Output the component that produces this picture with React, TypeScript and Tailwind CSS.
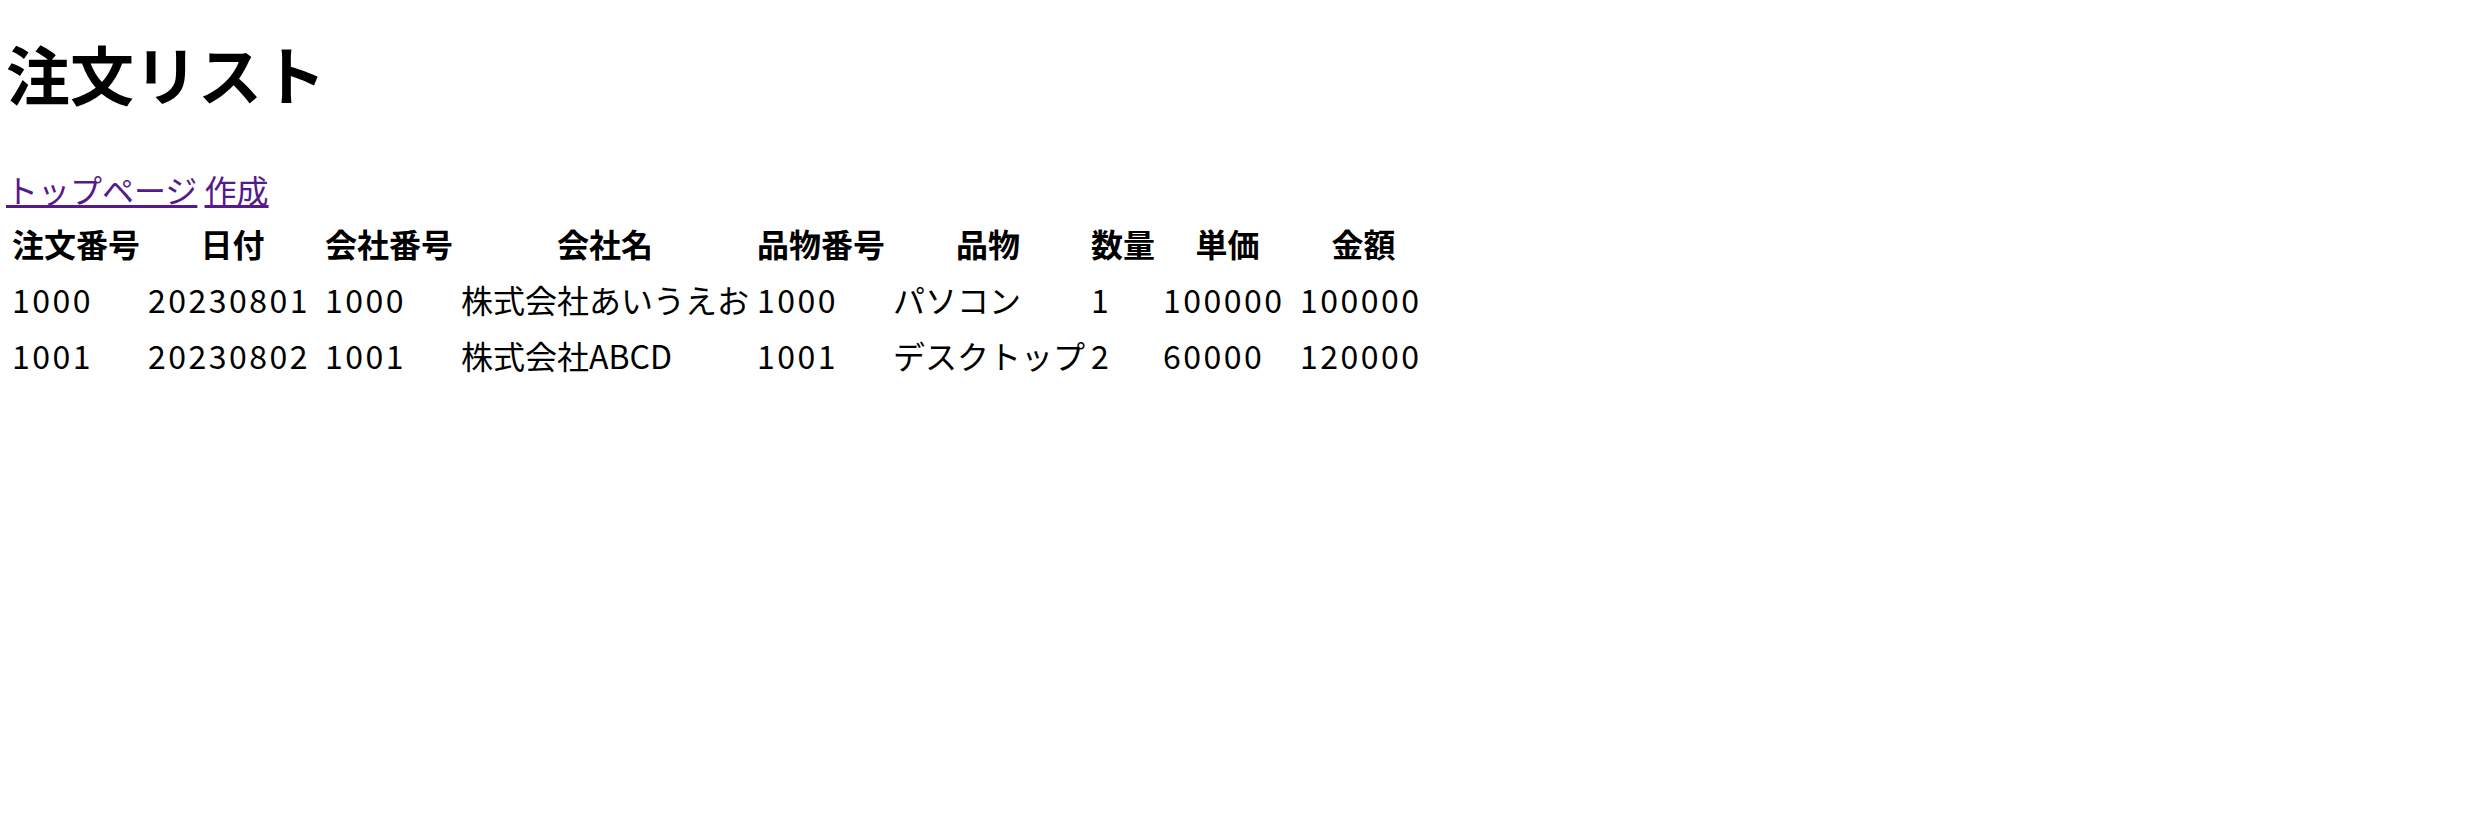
import React from "react";

const headers: { label: string; w: string }[] = [
  { label: "注文番号", w: "w-[132px]" },
  { label: "日付", w: "w-[173px]" },
  { label: "会社番号", w: "w-[132px]" },
  { label: "会社名", w: "w-[292px]" },
  { label: "品物番号", w: "w-[132px]" },
  { label: "品物", w: "w-[194px]" },
  { label: "数量", w: "w-[68px]" },
  { label: "単価", w: "w-[133px]" },
  { label: "金額", w: "w-[131px]" },
];

const rows: string[][] = [
  ["1000", "20230801", "1000", "株式会社あいうえお", "1000", "パソコン", "1", "100000", "100000"],
  ["1001", "20230802", "1001", "株式会社ABCD", "1001", "デスクトップ", "2", "60000", "120000"],
];

const isNum = (s: string) => /^[0-9]+$/.test(s);

export default function App() {
  return (
    <div
      className="min-h-screen bg-white text-black pl-[6px] pt-[24px]"
      style={{ fontFamily: '"Noto Sans CJK JP", "Noto Sans", sans-serif' }}
    >
      <h1 className="text-[64px] font-bold leading-[96px] mb-[45px]">注文リスト</h1>
      <div className="text-[32px] leading-[48px] h-[48px] whitespace-nowrap">
        <a href="#" className="text-[#551a8b] underline">
          トップページ
        </a>{" "}
        <a href="#" className="text-[#551a8b] underline">
          作成
        </a>
      </div>
      <table className="mt-[0px] table-fixed border-separate border-spacing-[4px] w-[1427px] text-[32px] leading-[48px]">
        <thead>
          <tr>
            {headers.map((h) => (
              <th key={h.label} className={`${h.w} p-[2px] font-bold text-center whitespace-nowrap`}>
                {h.label}
              </th>
            ))}
          </tr>
        </thead>
        <tbody>
          {rows.map((r, i) => (
            <tr key={i}>
              {r.map((c, j) => (
                <td
                  key={j}
                  className={
                    isNum(c)
                      ? "p-[2px] text-left whitespace-nowrap tracking-[2.5px]"
                      : "p-[2px] text-left whitespace-nowrap"
                  }
                >
                  {c}
                </td>
              ))}
            </tr>
          ))}
        </tbody>
      </table>
    </div>
  );
}
